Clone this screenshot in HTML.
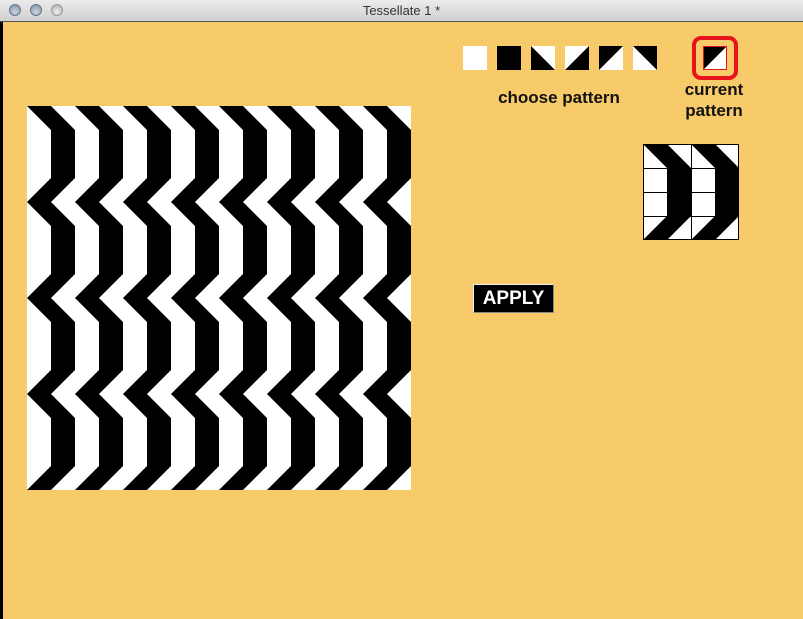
<!DOCTYPE html>
<html><head><style>
html,body{margin:0;padding:0;width:803px;height:619px;overflow:hidden;background:#f8cb6a;font-family:"Liberation Sans",sans-serif;}
#tb{position:absolute;left:0;top:0;width:803px;height:21px;background:linear-gradient(#ececec,#d0d0d0);border-bottom:1px solid #555;}
#tb .t{position:absolute;left:0;width:803px;top:3px;text-align:center;font-size:13px;color:#333;}
.dot{position:absolute;top:4px;width:12px;height:12px;border-radius:50%;background:radial-gradient(circle at 50% 70%,#c8d4e0,#7d8fa3);border:1px solid #6a7785;box-sizing:border-box;}
#ls{position:absolute;left:0;top:22px;width:3px;height:597px;background:#000;}
.lbl{position:absolute;font-weight:bold;font-size:17px;color:#111;text-align:center;}
#apply{position:absolute;left:473px;top:284px;width:81px;height:29px;box-sizing:border-box;background:#000;border:1px solid #eee;border-right-color:#888;border-bottom-color:#888;color:#fff;font-weight:bold;font-size:19px;text-align:center;line-height:27px;}
#cur{position:absolute;left:692px;top:36px;width:46px;height:44px;box-sizing:border-box;border:4px solid #e8141c;border-radius:9px;}
</style></head><body>
<div id="tb"><div class="dot" style="left:9px"></div><div class="dot" style="left:30px"></div><div class="dot" style="left:51px;background:radial-gradient(circle at 50% 70%,#eee,#aaa);border-color:#999"></div><div class="t">Tessellate 1 *</div></div>
<div id="ls"></div>
<svg style="position:absolute;left:0;top:0" width="803" height="619">
<defs>
<pattern id="p" x="27" y="106" width="48" height="96" patternUnits="userSpaceOnUse">
<rect width="48" height="96" fill="#fff"/>
<polygon points="0,0 24,0 48,24 48,72 24,96 0,96 24,72 24,24" fill="#000"/>
</pattern>
<pattern id="q" x="643" y="144" width="48" height="96" patternUnits="userSpaceOnUse">
<rect width="48" height="96" fill="#fff"/>
<polygon points="0,0 24,0 48,24 48,72 24,96 0,96 24,72 24,24" fill="#000"/>
</pattern>
</defs>
<rect x="27" y="106" width="384" height="384" fill="url(#p)"/>
<rect x="643" y="144" width="96" height="96" fill="url(#q)"/>
<g stroke="#000" stroke-width="1">
<line x1="643" y1="168.5" x2="739" y2="168.5"/><line x1="643" y1="192.5" x2="739" y2="192.5"/><line x1="643" y1="216.5" x2="739" y2="216.5"/>
<line x1="667.5" y1="144" x2="667.5" y2="240"/><line x1="691.5" y1="144" x2="691.5" y2="240"/><line x1="715.5" y1="144" x2="715.5" y2="240"/>
<rect x="643.5" y="144.5" width="95" height="95" fill="none"/>
</g>
<rect x="463" y="46" width="24" height="24" fill="#fff"/>
<rect x="497" y="46" width="24" height="24" fill="#000"/>
<rect x="531" y="46" width="24" height="24" fill="#fff"/><polygon points="531,46 555,70 531,70" fill="#000"/>
<rect x="565" y="46" width="24" height="24" fill="#fff"/><polygon points="589,46 589,70 565,70" fill="#000"/>
<rect x="599" y="46" width="24" height="24" fill="#fff"/><polygon points="599,46 623,46 599,70" fill="#000"/>
<rect x="633" y="46" width="24" height="24" fill="#fff"/><polygon points="633,46 657,46 657,70" fill="#000"/>
<rect x="703.5" y="46.5" width="23" height="23" fill="#fff" stroke="#e8141c"/><polygon points="704,47 726,47 704,69" fill="#000"/>
</svg>
<div id="cur"></div>
<div class="lbl" style="left:474px;top:88px;width:170px;">choose pattern</div>
<div class="lbl" style="left:664px;top:79px;width:100px;line-height:21px;">current<br>pattern</div>
<div id="apply">APPLY</div>
</body></html>
